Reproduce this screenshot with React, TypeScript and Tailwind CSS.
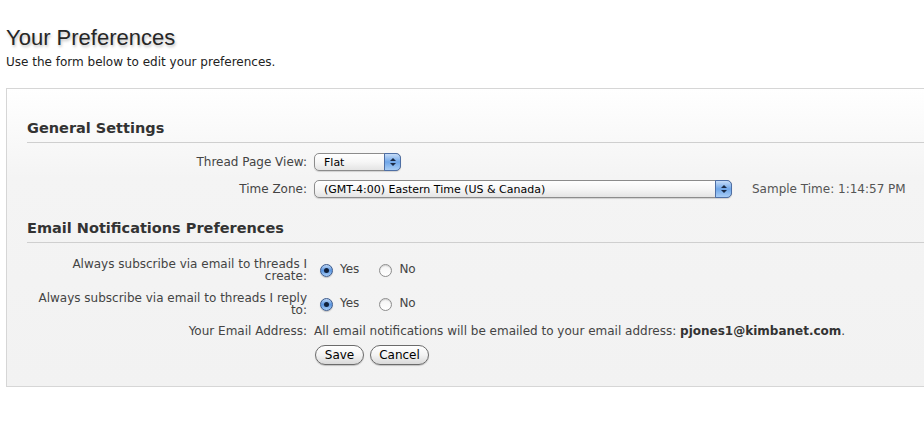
import React from "react";

const V = { fontFamily: '"DejaVu Sans", Verdana, sans-serif' };

function AquaSelect({ value, width }: { value: string; width: string }) {
  return (
    <div
      className={`relative flex h-[18px] items-center rounded-[5px] border border-[#8c8c8c] bg-gradient-to-b from-white via-[#f6f6f6] to-[#e4e4e4] shadow-[0_1px_1px_rgba(0,0,0,0.15)] ${width}`}
    >
      <span className="pl-[9px] text-[11px] leading-none text-black" style={V}>
        {value}
      </span>
      <div className="absolute right-[-1px] top-[-1px] flex h-[18px] w-[17px] flex-col items-center justify-center gap-[2px] rounded-r-[5px] border border-[#4e6fa5] bg-gradient-to-b from-[#c6dcf7] via-[#6fa6e8] to-[#a8cdf5]">
        <svg width="6" height="3" viewBox="0 0 6 3">
          <path d="M0 3 L3 0 L6 3 Z" fill="#1a2a44" />
        </svg>
        <svg width="6" height="3" viewBox="0 0 6 3">
          <path d="M0 0 L3 3 L6 0 Z" fill="#1a2a44" />
        </svg>
      </div>
    </div>
  );
}

function Radio({ checked }: { checked: boolean }) {
  if (checked) {
    return (
      <span className="flex h-[13px] w-[13px] items-center justify-center rounded-full border border-[#3c5a8c] bg-gradient-to-b from-[#bcd6f5] via-[#5a95e0] to-[#a9cef6] shadow-[0_1px_1px_rgba(0,0,0,0.2)]">
        <span className="h-[5px] w-[5px] rounded-full bg-[#10203a]" />
      </span>
    );
  }
  return (
    <span className="block h-[13px] w-[13px] rounded-full border border-[#8e8e8e] bg-gradient-to-b from-[#f4f4f4] to-white shadow-[inset_0_1px_1px_rgba(0,0,0,0.15)]" />
  );
}

function RadioPair() {
  return (
    <div className="flex items-center text-[12px] text-[#444]" style={V}>
      <span className="ml-[6px]">
        <Radio checked />
      </span>
      <span className="ml-[7px] -mt-[3px]">Yes</span>
      <span className="ml-[20px]">
        <Radio checked={false} />
      </span>
      <span className="ml-[7px] -mt-[3px]">No</span>
    </div>
  );
}

function Pill({ label, w }: { label: string; w: string }) {
  return (
    <button
      className={`flex h-[20px] items-center justify-center rounded-full border border-[#6b6b6b] bg-gradient-to-b from-white via-[#f3f3f3] to-[#d9d9d9] text-[12px] text-black shadow-[0_1px_1px_rgba(0,0,0,0.2)] ${w}`}
      style={{ fontFamily: '"DejaVu Sans", "Lucida Grande", sans-serif' }}
    >
      {label}
    </button>
  );
}

export default function App() {
  return (
    <div className="min-h-[429px] w-[924px] overflow-hidden bg-white">
      <div className="pl-[6px] pt-[25px]">
        <h1
          className="text-[22px] leading-[26px] text-[#262626] [text-shadow:1px_2px_3px_rgba(0,0,0,0.25)]"
          style={{ fontFamily: '"Liberation Sans", Arial, sans-serif' }}
        >
          Your Preferences
        </h1>
        <p className="mt-[4px] text-[12px] leading-[15px] text-[#222]" style={V}>
          Use the form below to edit your preferences.
        </p>

        <div className="mt-[18px] h-[299px] border-y border-l border-[#d6d6d6] bg-gradient-to-b from-white from-0% via-[#f4f4f4] via-30% to-[#f2f2f2] pl-[20px]">
          <h2
            className="mt-[30px] border-b border-[#cfcfcf] pb-[5px] text-[14.5px] font-bold leading-[18px] text-[#333]"
            style={V}
          >
            General Settings
          </h2>

          <div className="mt-[10px] flex h-[18px] items-center">
            <div className="w-[287px] pr-[7px] text-right text-[12px] text-[#444]" style={V}>
              Thread Page View:
            </div>
            <AquaSelect value="Flat" width="w-[87px]" />
          </div>
          <div className="mt-[9px] flex h-[18px] items-center">
            <div className="w-[287px] pr-[7px] text-right text-[12px] text-[#444]" style={V}>
              Time Zone:
            </div>
            <AquaSelect value="(GMT-4:00) Eastern Time (US & Canada)" width="w-[418px]" />
            <span className="ml-[20px] text-[12px] text-[#555]" style={V}>
              Sample Time: 1:14:57 PM
            </span>
          </div>

          <h2
            className="mt-[21px] border-b border-[#cfcfcf] pb-[5px] text-[14.5px] font-bold leading-[18px] text-[#333]"
            style={V}
          >
            Email Notifications Preferences
          </h2>

          <div className="mt-[15px] flex items-center">
            <div className="w-[287px] pr-[7px] text-right text-[12px] leading-[12px] text-[#444]" style={V}>
              Always subscribe via email to threads I create:
            </div>
            <RadioPair />
          </div>
          <div className="mt-[10px] flex items-center">
            <div className="w-[287px] pr-[7px] text-right text-[12px] leading-[12px] text-[#444]" style={V}>
              Always subscribe via email to threads I reply to:
            </div>
            <RadioPair />
          </div>
          <div className="mt-[8px] flex h-[13px] items-center">
            <div className="w-[287px] pr-[7px] text-right text-[12px] text-[#444]" style={V}>
              Your Email Address:
            </div>
            <span className="whitespace-nowrap text-[12px] text-[#444]" style={V}>
              All email notifications will be emailed to your email address:{" "}
              <b className="text-[#333]">pjones1@kimbanet.com</b>.
            </span>
          </div>
          <div className="mt-[8px] flex gap-[6px] pl-[288px]">
            <Pill label="Save" w="w-[49px]" />
            <Pill label="Cancel" w="w-[59px]" />
          </div>
        </div>
      </div>
    </div>
  );
}
